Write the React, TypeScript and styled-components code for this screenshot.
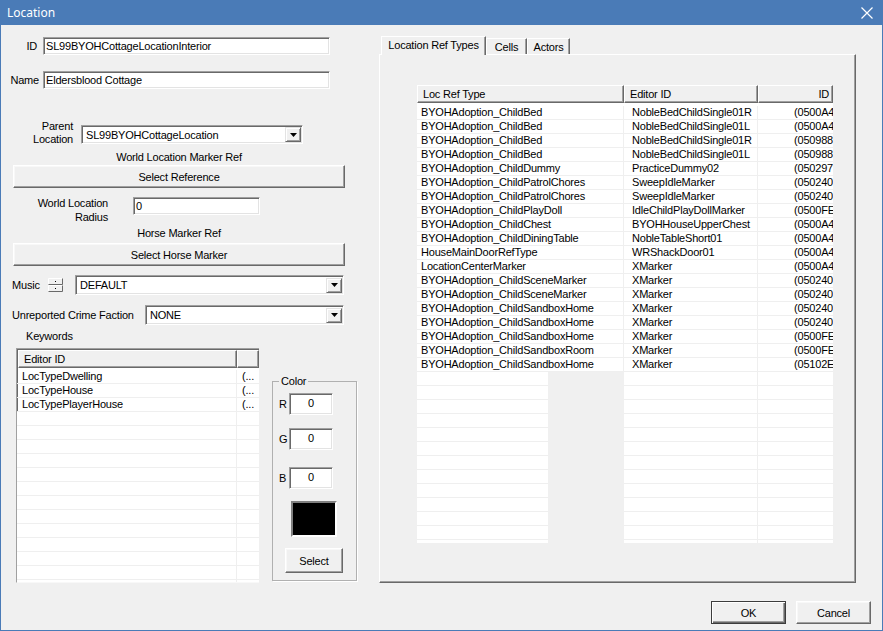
import React from 'react';
import styled, { createGlobalStyle } from 'styled-components';

const Global = createGlobalStyle`
  html, body { margin: 0; padding: 0; background: #f0f0f0; }
  body { font-family: "Liberation Sans", Arial, sans-serif; font-size: 11px; color: #000; letter-spacing: -0.2px; }
  * { box-sizing: border-box; }
`;

const Window = styled.div`
  width: 883px;
  height: 631px;
  display: flex;
  flex-direction: column;
  background: #f0f0f0;
  overflow: hidden;
`;

const TitleBar = styled.div`
  height: 25px;
  flex: none;
  background: #4a7bb7;
  color: #fff;
  display: flex;
  align-items: center;
  justify-content: space-between;
  padding: 0 10px 0 7px;
  font-family: "Noto Sans", "Open Sans", sans-serif;
  font-size: 12px;
  letter-spacing: 0;
`;

const Body = styled.div`
  flex: 1;
  display: flex;
  flex-direction: column;
  border: 1px solid #4a7bb7;
  border-top: none;
`;

const Main = styled.div`
  display: flex;
  align-items: flex-start;
`;

const LeftPane = styled.div`
  width: 378px;
  flex: none;
  display: flex;
  flex-direction: column;
`;

const Row = styled.div<{ $mt?: number; $ml?: number; $align?: string }>`
  display: flex;
  align-items: ${p => p.$align ?? 'center'};
  margin-top: ${p => p.$mt ?? 0}px;
  margin-left: ${p => p.$ml ?? 0}px;
`;

const Label = styled.div<{ $w: number; $right?: boolean; $lh?: number }>`
  width: ${p => p.$w}px;
  flex: none;
  text-align: ${p => (p.$right ? 'right' : 'left')};
  line-height: ${p => p.$lh ?? 14}px;
  white-space: pre-line;
`;

const Caption = styled.div<{ $mt: number; $ml: number; $w?: number }>`
  margin-top: ${p => p.$mt}px;
  margin-left: ${p => p.$ml}px;
  width: ${p => (p.$w ? `${p.$w}px` : 'auto')};
  text-align: ${p => (p.$w ? 'center' : 'left')};
  line-height: 14px;
`;

const TextBox = styled.div<{ $w: number; $h: number; $ml?: number; $mt?: number; $center?: boolean }>`
  width: ${p => p.$w}px;
  height: ${p => p.$h}px;
  flex: none;
  margin-left: ${p => p.$ml ?? 0}px;
  margin-top: ${p => p.$mt ?? 0}px;
  background: #fff;
  border: 1px solid;
  border-color: #a0a0a0 #fff #fff #a0a0a0;
  box-shadow: inset 1px 1px #696969, inset -1px -1px #e3e3e3;
  padding: 0 2px;
  display: flex;
  align-items: ${p => (p.$center ? 'flex-start' : 'center')};
  padding-top: ${p => (p.$center ? 3 : 0)}px;
  justify-content: ${p => (p.$center ? 'center' : 'flex-start')};
  white-space: nowrap;
  overflow: hidden;
`;

const ComboText = styled.span`
  flex: 1;
  padding-left: 2px;
  overflow: hidden;
`;

const DropBtn = styled.div`
  width: 16px;
  height: 15px;
  flex: none;
  margin-right: -1px;
  background: #f0f0f0;
  border: 1px solid;
  border-color: #e3e3e3 #696969 #696969 #e3e3e3;
  box-shadow: inset 1px 1px #fff, inset -1px -1px #a0a0a0;
  display: flex;
  align-items: center;
  justify-content: center;
`;

const Button = styled.button<{ $w: number; $h: number; $ml?: number; $mt?: number; $default?: boolean }>`
  width: ${p => p.$w}px;
  height: ${p => p.$h}px;
  flex: none;
  margin: ${p => p.$mt ?? 0}px 0 0 ${p => p.$ml ?? 0}px;
  padding: 0;
  font-family: inherit;
  font-size: 11px;
  letter-spacing: -0.2px;
  color: #000;
  background: #f0f0f0;
  border: 1px solid;
  border-color: ${p => (p.$default ? '#3c3c3c' : '#fff #696969 #696969 #fff')};
  box-shadow: ${p =>
    p.$default
      ? 'inset 1px 1px #fff, inset -1px -1px #696969, inset -2px -2px #a0a0a0'
      : 'inset -1px -1px #a0a0a0, inset 1px 1px #f8f8f8'};
`;

const ListView = styled.div<{ $w: number; $h: number; $sunken?: boolean }>`
  width: ${p => p.$w}px;
  height: ${p => p.$h}px;
  flex: none;
  background: #fff;
  display: flex;
  flex-direction: column;
  overflow: hidden;
  ${p =>
    p.$sunken
      ? `border-top: 1px solid #a0a0a0; border-left: 1px solid #a0a0a0; border-bottom: 1px solid #f8f8f8;
         box-shadow: inset 1px 1px #696969;`
      : ''}
`;

const Header = styled.div<{ $h: number; $pad?: number }>`
  display: flex;
  height: ${p => p.$h}px;
  flex: none;
  padding-top: ${p => p.$pad ?? 0}px;
  padding-left: ${p => p.$pad ?? 0}px;
`;

const HeaderCell = styled.div<{ $w?: number; $right?: boolean }>`
  width: ${p => (p.$w ? `${p.$w}px` : 'auto')};
  flex: ${p => (p.$w ? 'none' : '1')};
  background: #f0f0f0;
  border-top: 1px solid #fff;
  border-left: 1px solid #fff;
  border-bottom: 1px solid #696969;
  border-right: 1px solid #696969;
  box-shadow: inset -1px -1px #a0a0a0;
  display: flex;
  align-items: center;
  justify-content: ${p => (p.$right ? 'flex-end' : 'flex-start')};
  padding: 0 ${p => (p.$right ? 3 : 5)}px;
  white-space: nowrap;
  overflow: hidden;
`;

const Spacer = styled.div<{ $h: number }>`
  height: ${p => p.$h}px;
  flex: none;
`;

const DataRow = styled.div`
  display: flex;
  height: 14px;
  flex: none;
  line-height: 13px;
  border-bottom: 1px solid #efefef;
`;

const Cell = styled.div<{ $w: number; $pl?: number; $line?: boolean }>`
  width: ${p => p.$w}px;
  flex: none;
  padding-left: ${p => p.$pl ?? 4}px;
  white-space: nowrap;
  overflow: hidden;
  border-right: ${p => (p.$line ? '1px solid #efefef' : 'none')};
`;

const Filler = styled.div`
  flex: 1;
  display: flex;
`;

const FillSeg = styled.div<{ $w?: number; $gray?: boolean; $line?: boolean }>`
  width: ${p => (p.$w ? `${p.$w}px` : 'auto')};
  flex: ${p => (p.$w ? 'none' : '1')};
  background: ${p =>
    p.$gray ? '#f0f0f0' : 'repeating-linear-gradient(to bottom, #fff 0 13px, #efefef 13px 14px)'};
  border-right: ${p => (p.$line ? '1px solid #efefef' : 'none')};
`;

const Group = styled.fieldset`
  width: 85px;
  height: 207px;
  margin: 26px 0 0 13px;
  padding: 0 0 0 6px;
  border: 1px solid #b0b0b0;
  box-shadow: 1px 1px 0 #fff;
  display: flex;
  flex-direction: column;
  flex: none;
`;

const Legend = styled.legend`
  padding: 0 2px;
  line-height: 14px;
`;

const Swatch = styled.div`
  width: 46px;
  height: 36px;
  margin: 12px 0 0 12px;
  background: #000;
  border: 2px solid;
  border-color: #808080 #fff #fff #808080;
`;

const RightPane = styled.div`
  width: 477px;
  flex: none;
  margin-top: 11px;
  display: flex;
  flex-direction: column;
`;

const TabStrip = styled.div`
  display: flex;
  align-items: flex-end;
  height: 18px;
  padding-left: 2px;
  position: relative;
  z-index: 1;
`;

const Tab = styled.div<{ $w: number; $active?: boolean }>`
  width: ${p => p.$w}px;
  height: ${p => (p.$active ? 19 : 16)}px;
  margin-bottom: ${p => (p.$active ? -1 : 0)}px;
  padding-bottom: ${p => (p.$active ? 2 : 0)}px;
  flex: none;
  background: #f0f0f0;
  border-top: 1px solid #fff;
  border-left: 1px solid #fff;
  border-right: 1px solid #696969;
  box-shadow: inset -1px 0 #a0a0a0;
  display: flex;
  align-items: center;
  justify-content: center;
  white-space: nowrap;
`;

const TabPanel = styled.div`
  height: 529px;
  border: 1px solid;
  border-color: #fff #696969 #696969 #fff;
  box-shadow: inset -1px -1px #a0a0a0;
  padding: 30px 0 0 37px;
`;

const Footer = styled.div`
  display: flex;
  justify-content: flex-end;
  gap: 10px;
  margin-top: 18px;
  padding-right: 11px;
`;

const Tri = () => (
  <svg width="7" height="4" viewBox="0 0 7 4">
    <polygon points="0,0 7,0 3.5,4" fill="#000" />
  </svg>
);

const Combo = ({ w, ml, text }: { w: number; ml?: number; text: string }) => (
  <TextBox $w={w} $h={20} $ml={ml}>
    <ComboText>{text}</ComboText>
    <DropBtn>
      <Tri />
    </DropBtn>
  </TextBox>
);

const Spinner = () => (
  <svg width="15" height="14" viewBox="0 0 15 14">
    <rect x="0" y="0" width="15" height="14" fill="#f0f0f0" />
    <path d="M0.5 6.5 V0.5 H14.5" stroke="#fff" fill="none" />
    <path d="M0.5 6.5 H14.5 V0.5" stroke="#696969" fill="none" />
    <path d="M0.5 13.5 V7.5 H14.5" stroke="#fff" fill="none" />
    <path d="M0.5 13.5 H14.5 V7.5" stroke="#696969" fill="none" />
    <rect x="7" y="3" width="1" height="1" fill="#000" />
    <rect x="7" y="10" width="1" height="1" fill="#000" />
  </svg>
);

const CloseIcon = () => (
  <svg width="12" height="12" viewBox="0 0 12 12">
    <path d="M0.5 0.5 L11.5 11.5 M11.5 0.5 L0.5 11.5" stroke="#fff" strokeWidth="1.2" />
  </svg>
);

const keywords = ['LocTypeDwelling', 'LocTypeHouse', 'LocTypePlayerHouse'];

const refRows: [string, string, string][] = [
  ['BYOHAdoption_ChildBed', 'NobleBedChildSingle01R', '(0500A4'],
  ['BYOHAdoption_ChildBed', 'NobleBedChildSingle01L', '(0500A4'],
  ['BYOHAdoption_ChildBed', 'NobleBedChildSingle01R', '(050988'],
  ['BYOHAdoption_ChildBed', 'NobleBedChildSingle01L', '(050988'],
  ['BYOHAdoption_ChildDummy', 'PracticeDummy02', '(050297'],
  ['BYOHAdoption_ChildPatrolChores', 'SweepIdleMarker', '(050240'],
  ['BYOHAdoption_ChildPatrolChores', 'SweepIdleMarker', '(050240'],
  ['BYOHAdoption_ChildPlayDoll', 'IdleChildPlayDollMarker', '(0500FE'],
  ['BYOHAdoption_ChildChest', 'BYOHHouseUpperChest', '(0500A4'],
  ['BYOHAdoption_ChildDiningTable', 'NobleTableShort01', '(0500A4'],
  ['HouseMainDoorRefType', 'WRShackDoor01', '(0500A4'],
  ['LocationCenterMarker', 'XMarker', '(0500A4'],
  ['BYOHAdoption_ChildSceneMarker', 'XMarker', '(050240'],
  ['BYOHAdoption_ChildSceneMarker', 'XMarker', '(050240'],
  ['BYOHAdoption_ChildSandboxHome', 'XMarker', '(050240'],
  ['BYOHAdoption_ChildSandboxHome', 'XMarker', '(050240'],
  ['BYOHAdoption_ChildSandboxHome', 'XMarker', '(0500FE'],
  ['BYOHAdoption_ChildSandboxRoom', 'XMarker', '(0500FE'],
  ['BYOHAdoption_ChildSandboxHome', 'XMarker', '(05102E'],
];

export default function App() {
  return (
    <>
      <Global />
      <Window>
        <TitleBar>
          <span>Location</span>
          <CloseIcon />
        </TitleBar>
        <Body>
          <Main>
            <LeftPane>
              <Row $mt={12}>
                <Label $w={36} $right>ID</Label>
                <TextBox $w={287} $h={18} $ml={6}>SL99BYOHCottageLocationInterior</TextBox>
              </Row>
              <Row $mt={16}>
                <Label $w={38} $right>Name</Label>
                <TextBox $w={287} $h={18} $ml={4}>Eldersblood Cottage</TextBox>
              </Row>
              <Row $mt={31} $align="flex-start">
                <Label $w={72} $right $lh={13}>{'Parent\nLocation'}</Label>
                <TextBox $w={222} $h={19} $ml={8} $mt={5}>
                  <ComboText>SL99BYOHCottageLocation</ComboText>
                  <DropBtn>
                    <Tri />
                  </DropBtn>
                </TextBox>
              </Row>
              <Caption $mt={4} $ml={12} $w={332}>World Location Marker Ref</Caption>
              <Button $w={332} $h={23} $ml={12} $mt={1}>Select Reference</Button>
              <Row $mt={8} $align="flex-start">
                <Label $w={107} $right>{'World Location\nRadius'}</Label>
                <TextBox $w={127} $h={18} $ml={25} $mt={1}>0</TextBox>
              </Row>
              <Caption $mt={2} $ml={12} $w={332}>Horse Marker Ref</Caption>
              <Button $w={332} $h={23} $ml={12} $mt={3}>Select Horse Marker</Button>
              <Row $mt={9} $ml={11}>
                <Label $w={36}>Music</Label>
                <Spinner />
                <Combo w={269} ml={12} text="DEFAULT" />
              </Row>
              <Row $mt={10} $ml={11}>
                <Label $w={133}>Unreported Crime Faction</Label>
                <Combo w={199} text="NONE" />
              </Row>
              <Caption $mt={4} $ml={25}>Keywords</Caption>
              <Row $mt={5} $ml={15} $align="flex-start">
                <ListView $w={243} $h={235} $sunken>
                  <Header $h={19} $pad={1}>
                    <HeaderCell $w={219}>Editor ID</HeaderCell>
                    <HeaderCell />
                  </Header>
                  <Spacer $h={2} />
                  {keywords.map(k => (
                    <DataRow key={k}>
                      <Cell $w={220} $pl={5} $line>{k}</Cell>
                      <Cell $w={20} $pl={5}>(...</Cell>
                    </DataRow>
                  ))}
                  <Filler>
                    <FillSeg $w={220} $line />
                    <FillSeg />
                  </Filler>
                </ListView>
                <Group>
                  <Legend>Color</Legend>
                  <Row $mt={5}>
                    <Label $w={10}>R</Label>
                    <TextBox $w={44} $h={22} $center>0</TextBox>
                  </Row>
                  <Row $mt={13}>
                    <Label $w={10}>G</Label>
                    <TextBox $w={44} $h={22} $center>0</TextBox>
                  </Row>
                  <Row $mt={17}>
                    <Label $w={10}>B</Label>
                    <TextBox $w={44} $h={22} $center>0</TextBox>
                  </Row>
                  <Swatch />
                  <Button $w={58} $h={25} $ml={6} $mt={11}>Select</Button>
                </Group>
              </Row>
            </LeftPane>
            <RightPane>
              <TabStrip>
                <Tab $w={105} $active>Location Ref Types</Tab>
                <Tab $w={41}>Cells</Tab>
                <Tab $w={43}>Actors</Tab>
              </TabStrip>
              <TabPanel>
                <ListView $w={416} $h={458}>
                  <Header $h={18}>
                    <HeaderCell $w={207}>Loc Ref Type</HeaderCell>
                    <HeaderCell $w={134}>Editor ID</HeaderCell>
                    <HeaderCell $right>ID</HeaderCell>
                  </Header>
                  <Spacer $h={3} />
                  {refRows.map((r, i) => (
                    <DataRow key={i}>
                      <Cell $w={207} $line>{r[0]}</Cell>
                      <Cell $w={134} $pl={8} $line>{r[1]}</Cell>
                      <Cell $w={75} $pl={36}>{r[2]}</Cell>
                    </DataRow>
                  ))}
                  <Filler>
                    <FillSeg $w={131} />
                    <FillSeg $w={76} $gray />
                    <FillSeg $w={134} $line />
                    <FillSeg />
                  </Filler>
                </ListView>
              </TabPanel>
            </RightPane>
          </Main>
          <Footer>
            <Button $w={75} $h={23} $default>OK</Button>
            <Button $w={75} $h={23}>Cancel</Button>
          </Footer>
        </Body>
      </Window>
    </>
  );
}
